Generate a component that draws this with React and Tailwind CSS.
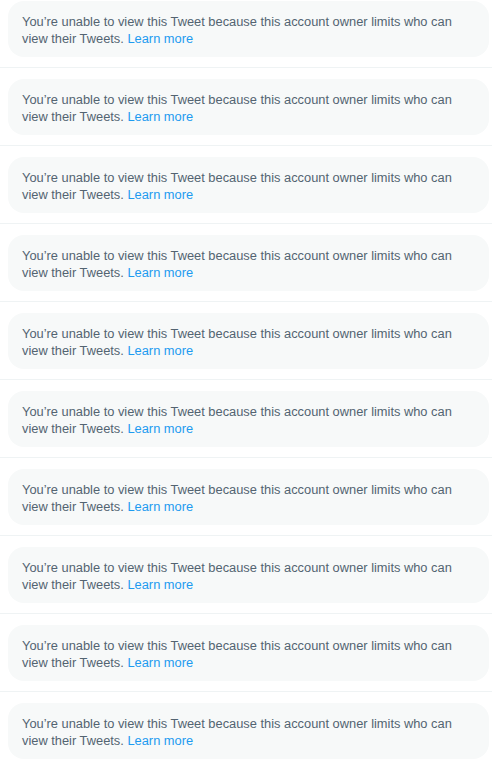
const ITEMS = Array.from({ length: 10 }, (_, i) => i)

function Notice() {
  return (
    <div className="ml-2 mr-[3px] rounded-2xl bg-[#f7f9f9] pl-[14px] pr-3 pt-[12px] pb-[10px] text-[12.85px] leading-[17px] text-[#536471]">
      You’re unable to view this Tweet because this account owner limits who can view their Tweets.{' '}
      <a href="#" className="text-[#1d9bf0]">
        Learn more
      </a>
    </div>
  )
}

export default function App() {
  return (
    <div className="min-h-screen overflow-hidden bg-white font-['Liberation_Sans',Arial,sans-serif]">
      <div className="-mt-[10px]">
        {ITEMS.map((i) => (
          <div key={i} className="border-b border-[#eff3f4] pt-[11px] pb-[10px]">
            <Notice />
          </div>
        ))}
      </div>
    </div>
  )
}
